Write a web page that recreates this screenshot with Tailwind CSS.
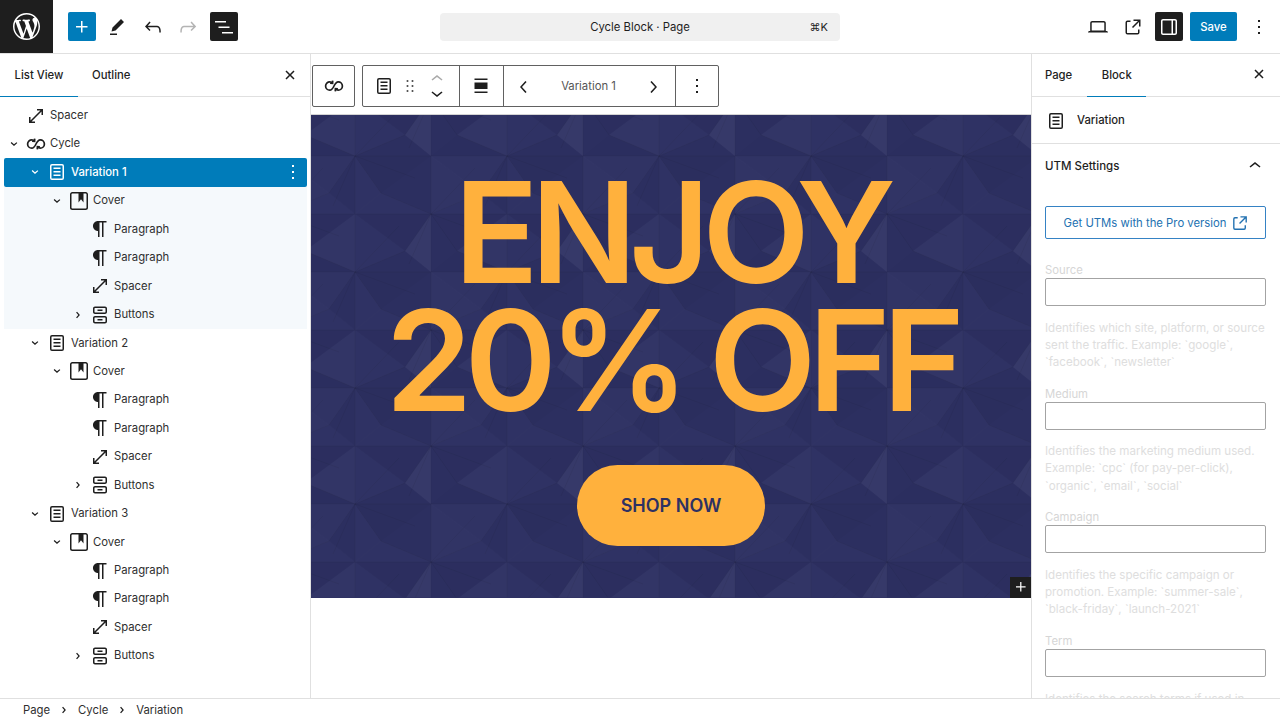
<!DOCTYPE html>
<html lang="en">
<head>
<meta charset="utf-8">
<title>Cycle Block</title>
<script src="https://cdn.jsdelivr.net/npm/@tailwindcss/browser@4"></script>
</head>
<body class="bg-white">
<svg class="hidden" xmlns="http://www.w3.org/2000/svg">
<symbol id="wp" viewBox="0 0 20 20"><path d="M20 10c0-5.51-4.49-10-10-10C4.48 0 0 4.49 0 10c0 5.52 4.48 10 10 10 5.51 0 10-4.48 10-10zM7.78 15.37L4.37 6.22c.55-.02 1.17-.08 1.17-.08.5-.06.44-1.13-.06-1.11 0 0-1.45.11-2.37.11-.18 0-.37 0-.58-.01C4.12 2.69 6.87 1.11 10 1.11c2.33 0 4.45.87 6.05 2.34-.68-.11-1.65.39-1.65 1.58 0 .74.45 1.36.9 2.1.35.61.55 1.36.55 2.46 0 1.49-1.4 5-1.4 5l-3.03-8.37c.54-.02.82-.17.82-.17.5-.05.44-1.25-.06-1.22 0 0-1.44.12-2.38.12-.87 0-2.33-.12-2.33-.12-.5-.03-.56 1.2-.06 1.22l.92.08 1.26 3.41zM17.41 10c.24-.64.74-1.87.43-4.25.7 1.29 1.05 2.71 1.05 4.25 0 3.29-1.73 6.24-4.4 7.78.97-2.59 1.94-5.2 2.92-7.78zM6.1 18.09C3.12 16.65 1.11 13.53 1.11 10c0-1.3.23-2.48.72-3.59C3.25 10.3 4.67 14.2 6.1 18.09zm4.03-6.63l2.58 6.98c-.86.29-1.76.45-2.71.45-.79 0-1.57-.11-2.29-.33.81-2.38 1.62-4.74 2.42-7.1z"/></symbol>
<symbol id="plus" viewBox="0 0 24 24"><path d="M11 12.5V17.5H12.5V12.5H17.5V11H12.5V6H11V11H6V12.5H11Z"/></symbol>
<symbol id="pencil" viewBox="0 0 24 24"><path d="m19 7-3-3-8.5 8.5-1 4 4-1L19 7Zm-7 11.5H5V20h7v-1.5Z"/></symbol>
<symbol id="undo" viewBox="0 0 24 24"><path d="M18.3 11.7c-.6-.6-1.4-.9-2.3-.9H6.7l2.9-3.3-1.1-1-4.5 5L8.5 16l1-1-2.7-2.7H16c.5 0 .9.2 1.3.5 1 1 1 3.4 1 4.5v.3h1.5v-.2c0-1.5 0-4.3-1.5-5.7z"/></symbol>
<symbol id="redo" viewBox="0 0 24 24"><path d="M15.6 6.5l-1.1 1 2.9 3.3H8c-.9 0-1.7.3-2.3.9-1.4 1.5-1.4 4.2-1.4 5.6v.2h1.5v-.3c0-1.1 0-3.5 1-4.5.3-.3.7-.5 1.3-.5h9.2L14.5 15l1.1 1.1 4.6-4.6-4.6-5z"/></symbol>
<symbol id="listview" viewBox="0 0 24 24"><path d="M3 6h11v1.5H3V6Zm3.5 5.5h11V13h-11v-1.5ZM21 17H10v1.5h11V17Z"/></symbol>
<symbol id="close" viewBox="0 0 24 24"><path d="m13.06 12 3.47-3.47-1.06-1.06L12 10.94 8.53 7.47 7.47 8.53 10.94 12l-3.47 3.47 1.06 1.06L12 13.06l3.47 3.47 1.06-1.06L13.06 12Z"/></symbol>
<symbol id="spacer" viewBox="0 0 24 24"><path d="M19 5h-6v1.5h3.44L6.5 16.44V13H5v6h6v-1.5H7.56L17.5 7.56V11H19V5Z"/></symbol>
<symbol id="group" viewBox="0 0 24 24"><path fill-rule="evenodd" d="M15.5 7.5h-7V9h7V7.5Zm-7 3.5h7v1.5h-7V11Zm7 3.5h-7V16h7v-1.5ZM17 4H7a2 2 0 0 0-2 2v12a2 2 0 0 0 2 2h10a2 2 0 0 0 2-2V6a2 2 0 0 0-2-2Zm0 1.5a.5.5 0 0 1 .5.5v12a.5.5 0 0 1-.5.5H7a.5.5 0 0 1-.5-.5V6a.5.5 0 0 1 .5-.5h10Z"/></symbol>
<symbol id="cover" viewBox="0 0 24 24"><path d="M18.7 3H5.3C4 3 3 4 3 5.3v13.4C3 20 4 21 5.3 21h13.4c1.3 0 2.3-1 2.3-2.3V5.3C21 4 20 3 18.7 3zm.8 15.7c0 .4-.4.8-.8.8H5.3c-.4 0-.8-.4-.8-.8V5.3c0-.4.4-.8.8-.8h6.2v8.9l2.5-3.1 2.5 3.1V4.5h2.2c.4 0 .8.4.8.8v13.4z"/></symbol>
<symbol id="para" viewBox="0 0 24 24"><path d="m9.99609 14v-.2251l.00391.0001v6.225h1.5v-14.5h2.5v14.5h1.5v-14.5h3v-1.5h-8.50391c-2.76142 0-5 2.23858-5 5 0 2.7614 2.23858 5 5 5z"/></symbol>
<symbol id="buttons" viewBox="0 0 24 24"><path fill-rule="evenodd" d="M14.5 17.5H9.5V16H14.5V17.5Z M14.5 8H9.5V6.5H14.5V8Z M7 3.5H17C18.1046 3.5 19 4.39543 19 5.5V9C19 10.1046 18.1046 11 17 11H7C5.89543 11 5 10.1046 5 9V5.5C5 4.39543 5.89543 3.5 7 3.5ZM17 5H7C6.72386 5 6.5 5.22386 6.5 5.5V9C6.5 9.27614 6.72386 9.5 7 9.5H17C17.2761 9.5 17.5 9.27614 17.5 9V5.5C17.5 5.22386 17.2761 5 17 5Z M7 13H17C18.1046 13 19 13.8954 19 15V18.5C19 19.6046 18.1046 20.5 17 20.5H7C5.89543 20.5 5 19.6046 5 18.5V15C5 13.8954 5.89543 13 7 13ZM17 14.5H7C6.72386 14.5 6.5 14.7239 6.5 15V18.5C6.5 18.7761 6.72386 19 7 19H17C17.2761 19 17.5 18.7761 17.5 18.5V15C17.5 14.7239 17.2761 14.5 17 14.5Z"/></symbol>
<symbol id="down" viewBox="0 0 24 24"><path d="m15.99 10.889-3.988 3.418-3.988-3.418.976-1.14 3.012 2.582 3.012-2.581.976 1.139Z"/></symbol>
<symbol id="right" viewBox="0 0 24 24"><path d="M10.8622 8.04053L14.2805 12.0286L10.8622 16.0167L9.72327 15.0405L12.3049 12.0286L9.72327 9.01672L10.8622 8.04053Z"/></symbol>
<symbol id="dots" viewBox="0 0 24 24"><path d="M13 19h-2v-2h2v2zm0-6h-2v-2h2v2zm0-6h-2V5h2v2z"/></symbol>
<symbol id="drag" viewBox="0 0 24 24"><path d="M8 5h2v2H8zM8 11h2v2H8zM8 17h2v2H8zM14 5h2v2h-2zM14 11h2v2h-2zM14 17h2v2h-2z"/></symbol>
<symbol id="cleft" viewBox="0 0 24 24"><path d="M14.6 7l-1.2-1L8 12l5.4 6 1.2-1-4.6-5z"/></symbol>
<symbol id="cright" viewBox="0 0 24 24"><path d="M10.6 6L9.4 7l4.6 5-4.6 5 1.2 1 5.4-6z"/></symbol>
<symbol id="cup" viewBox="0 0 24 24"><path d="M6.5 12.4L12 8l5.5 4.4-.9 1.2L12 10l-4.5 3.6-1-1.2z"/></symbol>
<symbol id="cdown" viewBox="0 0 24 24"><path d="M17.5 11.6L12 16l-5.5-4.4.9-1.2L12 14l4.5-3.6 1 1.2z"/></symbol>
<symbol id="laptop" viewBox="0 0 24 24"><path fill-rule="evenodd" d="M20.5 16h-.7V8c0-1.1-.9-2-2-2H6.2c-1.1 0-2 .9-2 2v8h-.7c-.8 0-1.5.7-1.5 1.5h20c0-.8-.7-1.5-1.5-1.5zM5.7 8c0-.3.2-.5.5-.5h11.6c.3 0 .5.2.5.5v7.6H5.7V8z"/></symbol>
<symbol id="external" viewBox="0 0 24 24"><path d="M19.5 4.5h-7V6h4.44l-5.97 5.97 1.06 1.06L18 7.06v4.44h1.5v-7Zm-13 1a2 2 0 0 0-2 2v10a2 2 0 0 0 2 2h10a2 2 0 0 0 2-2v-3H17v3a.5.5 0 0 1-.5.5h-10a.5.5 0 0 1-.5-.5v-10a.5.5 0 0 1 .5-.5h3V5.5h-3Z"/></symbol>
<symbol id="drawer" viewBox="0 0 24 24"><path fill-rule="evenodd" d="M18 4H6c-1.1 0-2 .9-2 2v12c0 1.1.9 2 2 2h12c1.1 0 2-.9 2-2V6c0-1.1-.9-2-2-2zM5.5 6c0-.3.2-.5.5-.5h8.5v13H6c-.3 0-.5-.2-.5-.5V6zm13 12c0 .3-.2.5-.5.5h-2v-13h2c.3 0 .5.2.5.5v12z"/></symbol>
<symbol id="align" viewBox="0 0 24 24"><path d="M5.5 4.5h13V6h-13V4.5ZM5.5 8.5h13V15h-13V8.5ZM5.5 17.5h13V19h-13v-1.5Z"/></symbol>
<symbol id="cycle" viewBox="0 0 24 24"><path fill="none" stroke="currentColor" stroke-width="1.7" d="M10.6 9.2C9.7 8.2 8.8 7.8 7.8 7.8A4.2 4.2 0 0 0 7.8 16.2C9.8 16.2 10.8 14.5 12 12C13.2 9.5 14.2 7.8 16.2 7.8A4.2 4.2 0 0 1 16.2 16.2C15.2 16.2 14.3 15.8 13.4 14.8M10.7 6.6l-.1 2.7-2.5-.2M13.3 17.4l.1-2.7 2.5.2"/></symbol>
</svg>

<div class="w-[1280px] h-[720px] overflow-hidden flex flex-col font-[family-name:Inter,sans-serif] text-[#1e1e1e] text-[11.3px]">

  <!-- Header -->
  <header class="h-[54px] shrink-0 border-b border-[#e0e0e0] flex items-center">
    <div class="w-[440px] h-full flex items-center">
      <div class="w-[53px] h-full bg-[#1e1e1e] flex items-center justify-center text-white">
        <svg class="w-[27px] h-[27px] fill-current"><use href="#wp"/></svg>
      </div>
      <button class="ml-[15px] w-[28px] h-[29px] rounded-[2px] bg-[#007cba] flex items-center justify-center text-white"><svg class="w-6 h-6 fill-current"><use href="#plus"/></svg></button>
      <svg class="ml-[9px] w-6 h-6 fill-[#1e1e1e]"><use href="#pencil"/></svg>
      <svg class="ml-3 w-6 h-6 fill-[#1e1e1e]"><use href="#undo"/></svg>
      <svg class="ml-[11px] w-6 h-6 fill-[#b4b4b4]"><use href="#redo"/></svg>
      <button class="ml-[10px] w-[28px] h-[29px] rounded-[2px] bg-[#1e1e1e] flex items-center justify-center text-white"><svg class="w-6 h-6 fill-current"><use href="#listview"/></svg></button>
    </div>
    <div class="w-[400px] h-[28px] mt-px pt-px rounded-[4px] bg-[#f0f0f0] relative flex items-center justify-center">
      <span>Cycle Block · Page</span>
      <span class="absolute right-[12px] text-[11px]">⌘K</span>
    </div>
    <div class="flex-1 flex items-center justify-end pr-[9px]">
      <svg class="w-6 h-6 fill-[#1e1e1e]"><use href="#laptop"/></svg>
      <svg class="ml-[11px] w-6 h-6 fill-[#1e1e1e]"><use href="#external"/></svg>
      <button class="ml-[10px] w-[28px] h-[29px] rounded-[2px] bg-[#1e1e1e] flex items-center justify-center text-white"><svg class="w-6 h-6 fill-current"><use href="#drawer"/></svg></button>
      <button class="ml-[7px] w-[47px] h-[29px] pt-[2px] rounded-[2px] bg-[#007cba] text-white font-medium">Save</button>
      <svg class="ml-[10px] w-6 h-6 fill-[#1e1e1e]"><use href="#dots"/></svg>
    </div>
  </header>

  <!-- Body -->
  <div class="h-[644px] shrink-0 flex overflow-hidden">

    <!-- List view -->
    <aside class="w-[311px] shrink-0 border-r border-[#e0e0e0] flex flex-col">
      <div class="h-[43px] shrink-0 border-b border-[#e0e0e0] flex items-stretch font-medium relative pt-px">
        <div class="w-[78px] flex items-center justify-center border-b-[1.5px] border-[#007cba] -mb-px">List View</div>
        <div class="ml-[14px] flex items-center">Outline</div>
        <svg class="absolute right-[8px] top-[9px] w-6 h-6 fill-[#1e1e1e]"><use href="#close"/></svg>
      </div>
      <div class="pt-[4.3px] pl-[4px] pr-[3px] text-[#2f2f2f]">
        <div class="h-[28.45px] flex items-center pl-[2px]"><span class="w-4 shrink-0"></span><svg class="ml-[2px] w-6 h-6 fill-[#1e1e1e]"><use href="#spacer"/></svg><span class="ml-[2px]">Spacer</span></div>
        <div class="h-[28.45px] flex items-center pl-[2px]"><svg class="-mx-[2px] w-5 h-5 fill-[#1e1e1e]"><use href="#down"/></svg><svg class="ml-[2px] w-6 h-6 text-[#1e1e1e]"><use href="#cycle"/></svg><span class="ml-[2px]">Cycle</span></div>

        <div class="h-[28.45px] flex items-center pl-[23px] pr-[2px] rounded-[2px] bg-[#007cba] text-white font-medium"><svg class="-mx-[2px] w-5 h-5 fill-white"><use href="#down"/></svg><svg class="ml-[2px] w-6 h-6 fill-white"><use href="#group"/></svg><span class="ml-[2px] flex-1">Variation 1</span><svg class="w-6 h-6 fill-white"><use href="#dots"/></svg></div>
        <div class="bg-[#f5f9fc]">
          <div class="h-[28.45px] flex items-center pl-[45px]"><svg class="-mx-[2px] w-5 h-5 fill-[#1e1e1e]"><use href="#down"/></svg><svg class="ml-[2px] w-6 h-6 fill-[#1e1e1e]"><use href="#cover"/></svg><span class="ml-[2px]">Cover</span></div>
          <div class="h-[28.45px] flex items-center pl-[66px]"><span class="w-4 shrink-0"></span><svg class="ml-[2px] w-6 h-6 fill-[#1e1e1e]"><use href="#para"/></svg><span class="ml-[2px]">Paragraph</span></div>
          <div class="h-[28.45px] flex items-center pl-[66px]"><span class="w-4 shrink-0"></span><svg class="ml-[2px] w-6 h-6 fill-[#1e1e1e]"><use href="#para"/></svg><span class="ml-[2px]">Paragraph</span></div>
          <div class="h-[28.45px] flex items-center pl-[66px]"><span class="w-4 shrink-0"></span><svg class="ml-[2px] w-6 h-6 fill-[#1e1e1e]"><use href="#spacer"/></svg><span class="ml-[2px]">Spacer</span></div>
          <div class="h-[28.45px] flex items-center pl-[66px]"><svg class="-mx-[2px] w-5 h-5 fill-[#1e1e1e]"><use href="#right"/></svg><svg class="ml-[2px] w-6 h-6 fill-[#1e1e1e]"><use href="#buttons"/></svg><span class="ml-[2px]">Buttons</span></div>
        </div>

        <div class="h-[28.45px] flex items-center pl-[23px]"><svg class="-mx-[2px] w-5 h-5 fill-[#1e1e1e]"><use href="#down"/></svg><svg class="ml-[2px] w-6 h-6 fill-[#1e1e1e]"><use href="#group"/></svg><span class="ml-[2px]">Variation 2</span></div>
        <div class="h-[28.45px] flex items-center pl-[45px]"><svg class="-mx-[2px] w-5 h-5 fill-[#1e1e1e]"><use href="#down"/></svg><svg class="ml-[2px] w-6 h-6 fill-[#1e1e1e]"><use href="#cover"/></svg><span class="ml-[2px]">Cover</span></div>
        <div class="h-[28.45px] flex items-center pl-[66px]"><span class="w-4 shrink-0"></span><svg class="ml-[2px] w-6 h-6 fill-[#1e1e1e]"><use href="#para"/></svg><span class="ml-[2px]">Paragraph</span></div>
        <div class="h-[28.45px] flex items-center pl-[66px]"><span class="w-4 shrink-0"></span><svg class="ml-[2px] w-6 h-6 fill-[#1e1e1e]"><use href="#para"/></svg><span class="ml-[2px]">Paragraph</span></div>
        <div class="h-[28.45px] flex items-center pl-[66px]"><span class="w-4 shrink-0"></span><svg class="ml-[2px] w-6 h-6 fill-[#1e1e1e]"><use href="#spacer"/></svg><span class="ml-[2px]">Spacer</span></div>
        <div class="h-[28.45px] flex items-center pl-[66px]"><svg class="-mx-[2px] w-5 h-5 fill-[#1e1e1e]"><use href="#right"/></svg><svg class="ml-[2px] w-6 h-6 fill-[#1e1e1e]"><use href="#buttons"/></svg><span class="ml-[2px]">Buttons</span></div>

        <div class="h-[28.45px] flex items-center pl-[23px]"><svg class="-mx-[2px] w-5 h-5 fill-[#1e1e1e]"><use href="#down"/></svg><svg class="ml-[2px] w-6 h-6 fill-[#1e1e1e]"><use href="#group"/></svg><span class="ml-[2px]">Variation 3</span></div>
        <div class="h-[28.45px] flex items-center pl-[45px]"><svg class="-mx-[2px] w-5 h-5 fill-[#1e1e1e]"><use href="#down"/></svg><svg class="ml-[2px] w-6 h-6 fill-[#1e1e1e]"><use href="#cover"/></svg><span class="ml-[2px]">Cover</span></div>
        <div class="h-[28.45px] flex items-center pl-[66px]"><span class="w-4 shrink-0"></span><svg class="ml-[2px] w-6 h-6 fill-[#1e1e1e]"><use href="#para"/></svg><span class="ml-[2px]">Paragraph</span></div>
        <div class="h-[28.45px] flex items-center pl-[66px]"><span class="w-4 shrink-0"></span><svg class="ml-[2px] w-6 h-6 fill-[#1e1e1e]"><use href="#para"/></svg><span class="ml-[2px]">Paragraph</span></div>
        <div class="h-[28.45px] flex items-center pl-[66px]"><span class="w-4 shrink-0"></span><svg class="ml-[2px] w-6 h-6 fill-[#1e1e1e]"><use href="#spacer"/></svg><span class="ml-[2px]">Spacer</span></div>
        <div class="h-[28.45px] flex items-center pl-[66px]"><svg class="-mx-[2px] w-5 h-5 fill-[#1e1e1e]"><use href="#right"/></svg><svg class="ml-[2px] w-6 h-6 fill-[#1e1e1e]"><use href="#buttons"/></svg><span class="ml-[2px]">Buttons</span></div>
      </div>
    </aside>

    <!-- Canvas -->
    <main class="w-[720px] shrink-0 flex flex-col">
      <div class="h-[61px] shrink-0 pt-[11px] pl-[1px] flex items-start gap-[7px] border-b border-[#d4d4d4]">
        <div class="w-[43px] h-[42px] rounded-[2px] border border-[#1e1e1e]/70 flex items-center justify-center"><svg class="w-6 h-6 text-[#1e1e1e]"><use href="#cycle"/></svg></div>
        <div class="w-[357px] h-[42px] rounded-[2px] border border-[#1e1e1e]/70 flex items-stretch">
          <div class="w-[97px] shrink-0 border-r border-[#1e1e1e]/70 flex items-center pl-[9px]">
            <svg class="w-6 h-6 fill-[#1e1e1e]"><use href="#group"/></svg>
            <svg class="ml-[4px] w-5 h-5 fill-[#1e1e1e]"><use href="#drag"/></svg>
            <div class="ml-[5px] flex flex-col">
              <svg class="w-6 h-6 -my-[5px] fill-[#aaaaaa]"><use href="#cup"/></svg>
              <svg class="w-6 h-6 -my-[5px] fill-[#1e1e1e]"><use href="#cdown"/></svg>
            </div>
          </div>
          <div class="w-[44px] shrink-0 border-r border-[#1e1e1e]/70 flex items-center justify-center pr-px"><svg class="w-6 h-6 fill-[#1e1e1e]"><use href="#align"/></svg></div>
          <div class="w-[172px] shrink-0 border-r border-[#1e1e1e]/70 flex items-center justify-between pl-[8px] pr-[10px] pt-px text-[#555555]">
            <svg class="w-6 h-6 fill-[#1e1e1e]"><use href="#cleft"/></svg>
            <span>Variation 1</span>
            <svg class="w-6 h-6 fill-[#1e1e1e]"><use href="#cright"/></svg>
          </div>
          <div class="flex-1 flex items-center justify-center"><svg class="w-6 h-6 fill-[#1e1e1e]"><use href="#dots"/></svg></div>
        </div>
      </div>

      <section class="h-[482.5px] shrink-0 relative overflow-hidden bg-[#2d3062] flex flex-col items-center pt-[53px]">
        <svg class="absolute inset-0 w-full h-full" xmlns="http://www.w3.org/2000/svg">
          <defs>
            <g id="fanA">
              <polygon points="0,0 76,0 26,37" fill="#000" fill-opacity=".04"/>
              <polygon points="0,0 26,37 0,58" fill="#fff" fill-opacity=".012"/>
              <polygon points="0,0 0,58 -26,37" fill="#000" fill-opacity=".02"/>
              <polygon points="0,0 -26,37 -76,0" fill="#fff" fill-opacity=".015"/>
              <polygon points="0,0 -76,0 -50,-21" fill="#000" fill-opacity=".035"/>
              <polygon points="0,0 -50,-21 0,-58" fill="#fff" fill-opacity=".025"/>
              <polygon points="0,0 0,-58 50,-21" fill="#fff" fill-opacity=".01"/>
              <polygon points="0,0 50,-21 76,0" fill="#000" fill-opacity=".025"/>
              <path d="M0 0L76 0M0 0L26 37M0 0L0 58M0 0L-26 37M0 0L-76 0M0 0L-50 -21M0 0L0 -58M0 0L50 -21M0 0L-22 50M0 0L44 -46M0 0L60 22" stroke="#000" stroke-opacity=".05" fill="none"/>
            </g>
            <g id="fanB">
              <polygon points="0,0 76,0 26,37" fill="#000" fill-opacity=".03"/>
              <polygon points="0,0 26,37 0,58" fill="#000" fill-opacity=".015"/>
              <polygon points="0,0 0,58 -26,37" fill="#fff" fill-opacity=".045"/>
              <polygon points="0,0 -26,37 -76,0" fill="#000" fill-opacity=".03"/>
              <polygon points="0,0 -76,0 -50,-21" fill="#fff" fill-opacity=".012"/>
              <polygon points="0,0 -50,-21 0,-58" fill="#000" fill-opacity=".02"/>
              <polygon points="0,0 0,-58 50,-21" fill="#fff" fill-opacity=".02"/>
              <polygon points="0,0 50,-21 76,0" fill="#fff" fill-opacity=".01"/>
              <path d="M0 0L76 0M0 0L26 37M0 0L0 58M0 0L-26 37M0 0L-76 0M0 0L-50 -21M0 0L0 -58M0 0L50 -21M0 0L-22 50M0 0L44 -46M0 0L60 22" stroke="#000" stroke-opacity=".05" fill="none"/>
            </g>
            <pattern id="tile" x="44" y="41" width="152" height="116" patternUnits="userSpaceOnUse">
              <use href="#fanA" x="0" y="0"/><use href="#fanA" x="152" y="0"/><use href="#fanA" x="0" y="116"/><use href="#fanA" x="152" y="116"/><use href="#fanB" x="76" y="58"/>
            </pattern>
          </defs>
          <rect width="100%" height="100%" fill="url(#tile)"/>
        </svg>
        <h1 class="relative text-center text-[140px] leading-[128px] font-semibold tracking-[-8px] text-[#ffb13d]">ENJOY<br>20% OFF</h1>
        <a class="relative mt-[41px] w-[188px] h-[81px] rounded-[41px] bg-[#ffb13d] flex items-center justify-center text-[#2e3163] text-[18px] font-semibold">SHOP NOW</a>
        <div class="absolute right-0 bottom-0 w-[21px] h-[21px] bg-[#1e1e1e] flex items-center justify-center text-white"><svg class="w-5 h-5 fill-current"><use href="#plus"/></svg></div>
      </section>
    </main>

    <!-- Settings -->
    <aside class="w-[249px] shrink-0 border-l border-[#e0e0e0] flex flex-col overflow-hidden">
      <div class="h-[43px] shrink-0 pt-px border-b border-[#e0e0e0] flex items-stretch font-medium relative">
        <div class="ml-[13px] flex items-center">Page</div>
        <div class="ml-[15px] w-[59px] flex items-center justify-center border-b-[1.5px] border-[#007cba] -mb-px">Block</div>
        <svg class="absolute right-[9px] top-[8px] w-6 h-6 fill-[#1e1e1e]"><use href="#close"/></svg>
      </div>
      <div class="h-[47px] shrink-0 pt-px border-b border-[#e0e0e0] flex items-center pl-[12px] font-medium">
        <svg class="w-6 h-6 fill-[#1e1e1e]"><use href="#group"/></svg>
        <span class="ml-[9px]">Variation</span>
      </div>
      <div class="h-[44px] shrink-0 pt-[2px] flex items-center justify-between pl-[13px] pr-[13px] font-medium text-[11.5px]">
        <span>UTM Settings</span>
        <svg class="w-6 h-6 -mt-[2px] fill-[#1e1e1e]"><use href="#cup"/></svg>
      </div>
      <div class="pl-[13px] pr-[14px] pt-[18px]">
        <a class="h-[33px] pt-px pl-[4px] rounded-[2px] border border-[#3582c4] text-[#2271b1] flex items-center justify-center gap-[3px]">Get UTMs with the Pro version <svg class="w-[22px] h-[22px] fill-[#2271b1]"><use href="#external"/></svg></a>
        <div class="mt-[23px] flex flex-col">
          <div class="h-[123.7px] shrink-0">
            <div class="h-4 leading-[16px] text-[#d6d6d6]">Source</div>
            <div class="h-[28px] rounded-[2px] border border-[#a3a3a3]"></div>
            <p class="mt-[13.5px] text-[11.6px] leading-[17.3px] text-[#dedede]">Identifies which site, platform, or source sent the traffic. Example: `google`, `facebook`, `newsletter`</p>
          </div>
          <div class="h-[123.7px] shrink-0">
            <div class="h-4 leading-[16px] text-[#d6d6d6]">Medium</div>
            <div class="h-[28px] rounded-[2px] border border-[#a3a3a3]"></div>
            <p class="mt-[13.5px] text-[11.6px] leading-[17.3px] text-[#dedede]">Identifies the marketing medium used. Example: `cpc` (for pay-per-click), `organic`, `email`, `social`</p>
          </div>
          <div class="h-[123.7px] shrink-0">
            <div class="h-4 leading-[16px] text-[#d6d6d6]">Campaign</div>
            <div class="h-[28px] rounded-[2px] border border-[#a3a3a3]"></div>
            <p class="mt-[13.5px] text-[11.6px] leading-[17.3px] text-[#dedede]">Identifies the specific campaign or promotion. Example: `summer-sale`, `black-friday`, `launch-2021`</p>
          </div>
          <div class="h-[123.7px] shrink-0">
            <div class="h-4 leading-[16px] text-[#d6d6d6]">Term</div>
            <div class="h-[28px] rounded-[2px] border border-[#a3a3a3]"></div>
            <p class="mt-[13.5px] text-[11.6px] leading-[17.3px] text-[#dedede]">Identifies the search terms if used in</p>
          </div>
        </div>
      </div>
    </aside>
  </div>

  <!-- Footer -->
  <footer class="h-[22px] shrink-0 pt-px border-t border-[#e0e0e0] flex items-center pl-[23px] text-[#2f2f2f]">
    <span>Page</span>
    <svg class="mx-[4px] w-5 h-5 fill-[#1e1e1e]"><use href="#right"/></svg>
    <span>Cycle</span>
    <svg class="mx-[4px] w-5 h-5 fill-[#1e1e1e]"><use href="#right"/></svg>
    <span>Variation</span>
  </footer>
</div>
</body>
</html>
